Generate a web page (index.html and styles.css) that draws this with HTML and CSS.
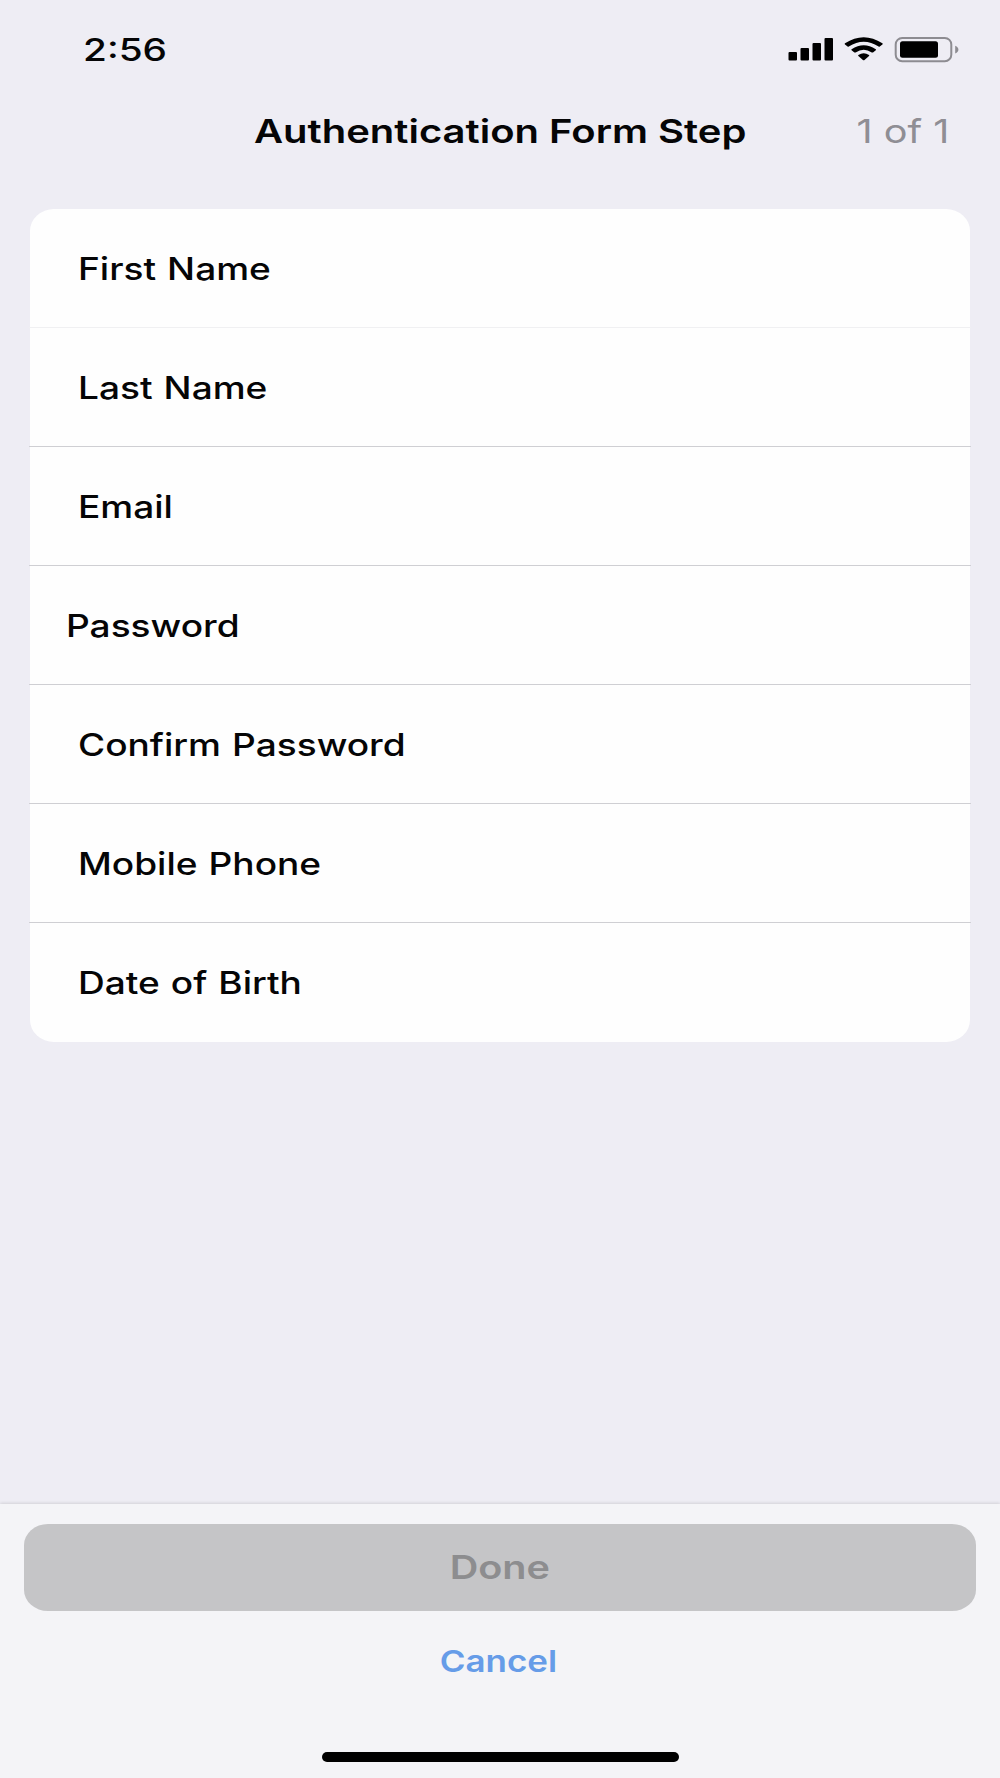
FILE: index.html
```html
<!DOCTYPE html>
<html lang="en">
<head>
  <meta charset="UTF-8" />
  <meta name="viewport" content="width=device-width, initial-scale=1.0"/>
  <title>Authentication Form Step</title>
  <link rel="stylesheet" href="styles.css">
</head>
<body>
  <div class="status-bar">
    <span class="time wide">2:56</span>
    <svg class="status-icons" width="172" height="26" viewBox="0 0 172 26">
      <!-- signal -->
      <rect x="0.5" y="15" width="8.5" height="8.5" rx="1"/>
      <rect x="12.5" y="11" width="8.5" height="12.5" rx="1"/>
      <rect x="24.5" y="6" width="8.5" height="17.5" rx="1"/>
      <rect x="36.5" y="1" width="8.5" height="22.5" rx="1"/>
      <!-- wifi -->
      <path d="M57 6.3Q75.700 -6 94.400 6.300Q95 6.900 94.400 7.500L91.800 9.500Q91.200 9.900 90.600 9.500Q75.700 -0.200 60.800 9.500Q60.200 9.900 59.600 9.500L57 7.500Q56.400 6.900 57 6.300Z"/>
      <path d="M63.600 12.200Q75.700 4.200 87.800 12.200Q88.400 12.700 87.800 13.300L85 15.400Q84.400 15.800 83.800 15.400Q75.700 10 67.600 15.400Q67 15.800 66.400 15.400L63.600 13.300Q63 12.700 63.600 12.200Z"/>
      <path d="M70.400 17.900Q75.700 14.800 81 17.900Q81.600 18.400 81 19L76.500 23Q75.700 23.500 74.900 23L70.400 19Q69.800 18.400 70.400 17.900Z"/>
      <!-- battery -->
      <rect class="battery-frame" x="107.700" y="1" width="55.600" height="23.200" rx="6.500"/>
      <rect x="112" y="4.200" width="38" height="16.500" rx="2.500"/>
      <path class="battery-tip" d="M167.200 8.800C171.500 10.300 171.500 15 167.200 16.500Z"/>
    </svg>
  </div>

  <header class="header">
    <h1 class="title wide">Authentication Form Step</h1>
    <span class="step-count wide">1 of 1</span>
  </header>

  <main class="form-card">
    <div class="row light"><span class="label wide">First Name</span></div>
    <div class="row"><span class="label wide">Last Name</span></div>
    <div class="row"><span class="label wide">Email</span></div>
    <div class="row outdent"><span class="label wide">Password</span></div>
    <div class="row"><span class="label wide">Confirm Password</span></div>
    <div class="row"><span class="label wide">Mobile Phone</span></div>
    <div class="row"><span class="label wide">Date of Birth</span></div>
  </main>

  <footer class="footer">
    <button class="done-button" disabled><span class="wide">Done</span></button>
    <button class="cancel-button"><span class="wide">Cancel</span></button>
    <div class="home-indicator"></div>
  </footer>
</body>
</html>
```

FILE: styles.css
```css
* {
  box-sizing: border-box;
}
body {
  margin: 0;
  height: 1778px;
  display: flex;
  flex-direction: column;
  background-color: #eeedf4;
  font-family: Inter, "Liberation Sans", sans-serif;
  color: #050506;
  overflow: hidden;
}
.wide {
  display: inline-block;
  transform: scaleX(1.2);
  white-space: nowrap;
}
.status-bar {
  height: 98px;
  padding: 2px 40px 0 83px;
  display: flex;
  justify-content: space-between;
  align-items: center;
}
.time {
  font-size: 31px;
  font-weight: 500;
  line-height: 40px;
  transform: scaleX(1.25);
  transform-origin: left;
}
.status-icons {
  display: block;
}
.battery-frame {
  fill: none;
  stroke: #8d8c91;
  stroke-width: 2;
}
.battery-tip {
  fill: #8d8c91;
}
.header {
  height: 66px;
  padding-right: 51px;
  display: grid;
  grid-template-columns: 1fr auto 1fr;
  align-items: center;
}
.title {
  grid-column: 2;
  margin: 0 -51px 0 0;
  font-size: 33px;
  font-weight: 600;
  line-height: 40px;
  transform: scaleX(1.212);
}
.step-count {
  justify-self: end;
  font-size: 33px;
  line-height: 40px;
  color: #8f8e94;
  transform-origin: right;
}
.form-card {
  margin: 45px 30px 0;
  background-color: #fefefe;
  border-radius: 24px / 22px;
}
.row {
  height: 119px;
  margin: 0 -1px;
  padding-left: 49px;
  display: flex;
  align-items: center;
  border-bottom: 1px solid #cfcfd3;
}
.row.light {
  border-color: #f0f0f2;
}
.row.outdent {
  padding-left: 37px;
}
.row:last-child {
  border-bottom: none;
}
.label {
  font-size: 31px;
  font-weight: 500;
  word-spacing: 1px;
  transform: scaleX(1.195);
  transform-origin: left;
}
.footer {
  height: 274px;
  margin-top: auto;
  padding: 20px 24px 0;
  display: flex;
  flex-direction: column;
  align-items: center;
  background-color: #f4f4f7;
  box-shadow: 0 -1px 3px rgba(0, 0, 0, 0.12);
}
button {
  padding: 0;
  border: none;
  font-family: inherit;
  font-weight: 600;
}
.done-button {
  width: 100%;
  height: 87px;
  padding-bottom: 1px;
  border-radius: 24px / 21px;
  background-color: #c5c5c7;
  color: #8d8d8f;
  font-size: 33px;
}
.cancel-button {
  height: 60px;
  margin-top: 20px;
  padding-right: 3px;
  background: none;
  color: #669ce8;
  font-size: 30px;
}
.cancel-button .wide {
  transform: scaleX(1.165);
}
.home-indicator {
  width: 357px;
  height: 10px;
  margin-top: 61px;
  border-radius: 5px;
  background-color: #000;
}
```
